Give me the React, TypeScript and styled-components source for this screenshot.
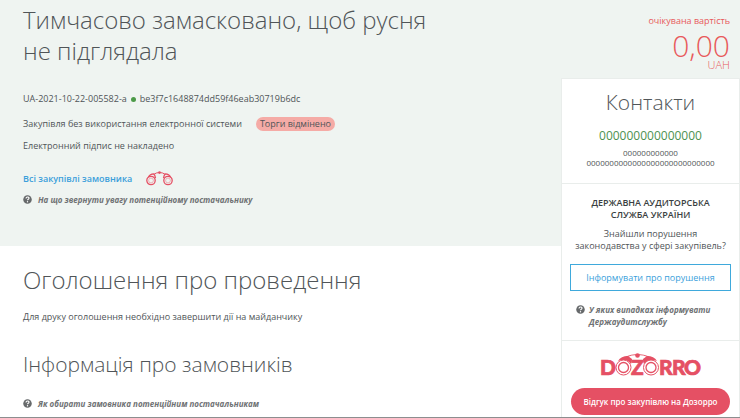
import React from "react";
import styled, { createGlobalStyle } from "styled-components";

const GlobalStyle = createGlobalStyle`
  *, *::before, *::after { box-sizing: border-box; }
  body {
    margin: 0;
    background: #fff;
    color: #505558;
    font-family: "Open Sans", "Noto Sans", sans-serif;
    font-size: 9px;
    line-height: 14px;
  }
  h1, h2, h3, p { margin: 0; }
`;

const Page = styled.div`
  display: grid;
  grid-template-columns: minmax(0, 1fr) 179px;
  grid-template-rows: auto 1fr;
  min-height: 100vh;
  border-bottom: 1px solid #8c8e8f;
`;

const Hero = styled.header`
  grid-area: 1 / 1 / 2 / 3;
  padding: 4px 200px 40px 23px;
  background: #eff4f1;
`;

const Main = styled.main`
  grid-area: 2 / 1 / 3 / 2;
  padding: 17px 20px 0 23px;
`;

const Aside = styled.aside`
  grid-area: 1 / 2 / 3 / 3;
  display: flex;
  flex-direction: column;
`;

const Title = styled.h1`
  max-width: 420px;
  font-size: 24px;
  line-height: 31px;
  font-weight: 300;
`;

const Heading = styled.h2<{ $size: number }>`
  font-size: ${(p) => p.$size}px;
  line-height: 34px;
  font-weight: 300;
`;

const Line = styled.p<{ $top: number }>`
  display: flex;
  align-items: center;
  gap: 14px;
  margin-top: ${(p) => p.$top}px;
`;

const Code = styled.p`
  margin-top: 26px;
`;

const Dot = styled.span`
  display: inline-block;
  width: 5px;
  height: 5px;
  margin: 0 4px 0;
  border-radius: 50%;
  background: #4c9a48;
`;

const Status = styled.span`
  padding: 0 4px;
  border-radius: 7px;
  background: #f5aba6;
`;

const BuyerLink = styled.a`
  color: #3b9fdb;
  font-weight: 600;
  text-decoration: none;
`;

const Hint = styled.a<{ $top: number }>`
  display: flex;
  gap: 6px;
  margin-top: ${(p) => p.$top}px;
  color: #6f7274;
  font-size: 8px;
  line-height: 12px;
  font-weight: 700;
  font-style: italic;
  text-align: left;
  text-decoration: none;

  svg { flex: none; margin-top: 1px; }
`;

const Price = styled.div`
  display: flex;
  flex-direction: column;
  align-items: flex-end;
  height: 78px;
  padding: 14px 10px 0 0;
  color: #e8595b;
  font-size: 9px;
`;

const Amount = styled.strong`
  font-size: 30px;
  line-height: 36px;
  font-weight: 300;
`;

const Currency = styled.span`
  font-size: 11px;
  line-height: 2px;
  font-weight: 300;
`;

const Card = styled.div`
  flex: 1;
  border: 1px solid #e9edeb;
  border-bottom: 0;
  background: #fff;
  text-align: center;
`;

const Section = styled.section<{ $pad: string }>`
  padding: ${(p) => p.$pad};

  & + & { border-top: 1px solid #e9edeb; }
`;

const CardTitle = styled.h2`
  font-size: 21px;
  line-height: 28px;
  font-weight: 300;
`;

const ContactName = styled.p`
  margin-top: 12px;
  color: #4c9150;
  font-size: 12px;
  line-height: 16px;
`;

const ContactData = styled.p`
  margin-top: 4px;
  font-size: 8px;
  line-height: 10px;
`;

const Agency = styled.h3`
  font-size: 9px;
  line-height: 12px;
  font-weight: 600;
  color: #3b3f42;
`;

const Question = styled.p`
  margin-top: 7px;
  line-height: 12px;
`;

const OutlineButton = styled.button`
  display: block;
  width: 100%;
  height: 27px;
  margin-top: 12px;
  padding: 0;
  border: 1px solid #3fa9dc;
  background: #fff;
  color: #3b9fdb;
  font: 400 9px/14px "Open Sans", "Noto Sans", sans-serif;
`;

const CaseHint = styled(Hint)`
  padding-left: 6px;
  gap: 4px;
`;

const ReviewButton = styled.button`
  display: block;
  width: 100%;
  height: 27px;
  margin-top: 12px;
  padding: 0;
  border: 0;
  border-radius: 14px;
  background: #e55064;
  color: #fff;
  font: 600 8px/14px "Open Sans", "Noto Sans", sans-serif;
`;

const LogoSvg = styled.svg`
  display: block;
  overflow: visible;
  margin: 0 auto;
  fill: #e55064;

  text {
    font: 900 21px Lato, sans-serif;
    stroke: #e55064;
    stroke-width: 0.7px;
  }
`;

const HelpIcon = () => (
  <svg width="9" height="9" viewBox="0 0 18 18" aria-hidden="true">
    <circle cx="9" cy="9" r="8.5" fill="#66696b" />
    <path d="M6 7c0-4 6-4 6-.6 0 2-3 2.100-3 4.200" fill="none" stroke="#fff" strokeWidth="2.200" />
    <circle cx="9" cy="13.500" r="1.400" fill="#fff" />
  </svg>
);

const Binoculars = () => (
  <svg width="27" height="15" viewBox="0 0 27 15" fill="none" stroke="#e55064" aria-hidden="true">
    <circle cx="5" cy="9.500" r="4.200" strokeWidth="1.300" />
    <circle cx="5" cy="9.500" r="2.400" strokeWidth=".4" />
    <circle cx="22" cy="9.500" r="4.200" strokeWidth="1.300" />
    <circle cx="22" cy="9.500" r="2.400" strokeWidth=".4" />
    <path d="M2.500 6Q4 3 7.500 2.800Q9 3.500 9.500 7M24.500 6Q23 3 19.500 2.800Q18 3.500 17.500 7" strokeWidth="1.300" />
    <path d="M8 3.200Q10.500 1.500 13.500 1.500T19 3.200" strokeWidth="1" />
    <circle cx="13.500" cy="1.600" r="1.300" fill="#e55064" stroke="none" />
  </svg>
);

const Logo = () => (
  <LogoSvg width="100" height="23" viewBox="0 0 100 23" role="img" aria-label="DOZORRO">
    <text x="-1" y="22">D</text>
    <text x="30" y="22">Z</text>
    <text x="58" y="22">R</text>
    <text x="71" y="22">R</text>
    <text x="83" y="22">O</text>
    <path d="M17 8Q20 3 27 3L31 6Q31 9 30 11Q26 5 17 8ZM56 8Q53 3 46 3L42 6Q42 9 43 11Q47 5 56 8Z" />
    <path d="M25 4Q30 1.500 36.500 1.500T48 4" fill="none" stroke="#e55064" strokeWidth="1.200" />
    <circle cx="36.500" cy="2.500" r="2.300" />
    <g fill="#fff" stroke="#e55064">
      <circle cx="22.500" cy="14.500" r="7.500" strokeWidth="1" />
      <circle cx="22.500" cy="14.500" r="5" strokeWidth="1.300" />
      <circle cx="50" cy="14.500" r="7.500" strokeWidth="1" />
      <circle cx="50" cy="14.500" r="5" strokeWidth="1.300" />
    </g>
  </LogoSvg>
);

export default function App() {
  return (
    <>
      <GlobalStyle />
      <Page>
        <Hero>
          <Title>Тимчасово замасковано, щоб русня не підглядала</Title>
          <Code>UA-2021-10-22-005582-a<Dot />be3f7c1648874dd59f46eab30719b6dc</Code>
          <Line $top={11}>
            Закупівля без використання електронної системи <Status>Торги відмінено</Status>
          </Line>
          <Line $top={8}>Електронний підпис не накладено</Line>
          <Line $top={18}>
            <BuyerLink href="#buyer">Всі закупівлі замовника</BuyerLink>
            <Binoculars />
          </Line>
          <Hint href="#attention" $top={8}>
            <HelpIcon />
            На що звернути увагу потенційному постачальнику
          </Hint>
        </Hero>
        <Main>
          <Heading $size={24}>Оголошення про проведення</Heading>
          <Line $top={13}>Для друку оголошення необхідно завершити дії на майданчику</Line>
          <Line as="div" $top={23}>
            <Heading $size={21}>Інформація про замовників</Heading>
          </Line>
          <Hint href="#choose" $top={17}>
            <HelpIcon />
            Як обирати замовника потенційним постачальникам
          </Hint>
        </Main>
        <Aside>
          <Price>
            <span>очікувана вартість</span>
            <Amount>0,00</Amount>
            <Currency>UAH</Currency>
          </Price>
          <Card>
            <Section $pad="9px 8px 15px">
              <CardTitle>Контакти</CardTitle>
              <ContactName>000000000000000</ContactName>
              <ContactData>
                000000000000
                <br />
                0000000000000000000000000000
              </ContactData>
            </Section>
            <Section $pad="13px 8px 12px">
              <Agency>
                ДЕРЖАВНА АУДИТОРСЬКА
                <br />
                СЛУЖБА УКРАЇНИ
              </Agency>
              <Question>
                Знайшли порушення
                <br />
                законодавства у сфері закупівель?
              </Question>
              <OutlineButton type="button">Інформувати про порушення</OutlineButton>
              <CaseHint href="#cases" $top={13}>
                <HelpIcon />
                <span>
                  У яких випадках інформувати
                  <br />
                  Держаудитслужбу
                </span>
              </CaseHint>
            </Section>
            <Section $pad="12px 9px 2px">
              <Logo />
              <ReviewButton type="button">Відгук про закупівлю на Дозорро</ReviewButton>
            </Section>
          </Card>
        </Aside>
      </Page>
    </>
  );
}
